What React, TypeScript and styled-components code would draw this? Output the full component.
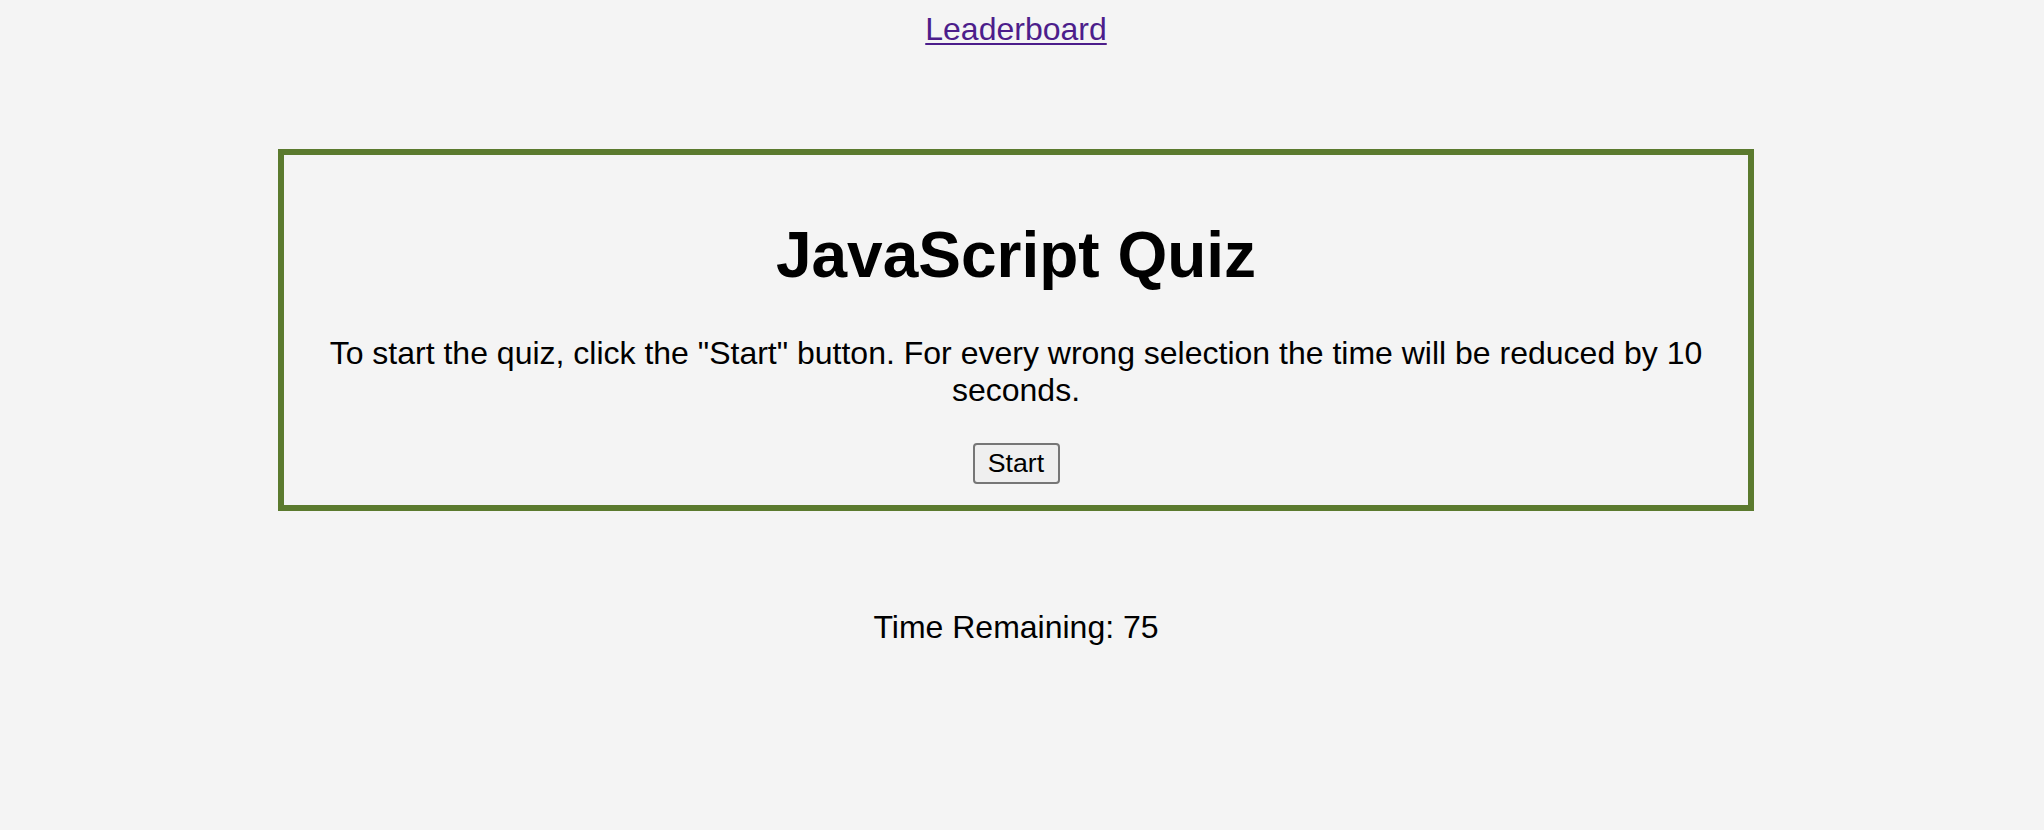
import React from "react";
import styled, { createGlobalStyle } from "styled-components";

const GlobalStyle = createGlobalStyle`
  html, body {
    margin: 0;
    padding: 0;
    background: #f4f4f4;
  }
  body {
    font-family: "Liberation Sans", Arial, sans-serif;
    color: #000;
  }
`;

const Page = styled.div`
  width: 2032px;
  text-align: center;
  font-family: "Liberation Sans", Arial, sans-serif;
`;

const Nav = styled.nav`
  padding-top: 11px;
  font-size: 32px;
  line-height: normal;
`;

const NavLink = styled.a`
  color: #4c1d8b;
  text-decoration: underline;
  text-decoration-thickness: 2px;
  text-underline-offset: 3px;
`;

const QuizCard = styled.section`
  box-sizing: border-box;
  width: 1476px;
  margin: 101px auto 0;
  padding: 20px 20px 21px;
  border: 6px solid #5b7a2e;
`;

const Title = styled.h1`
  margin: 43px 0;
  font-size: 64px;
  font-weight: 700;
  line-height: normal;
`;

const Intro = styled.p`
  margin: 0 0 34px;
  font-size: 32px;
  line-height: normal;
`;

const StartButton = styled.button`
  box-sizing: border-box;
  width: 87px;
  height: 41px;
  padding: 0;
  font-family: "Liberation Sans", Arial, sans-serif;
  font-size: 26.67px;
  line-height: 1;
  color: #000;
  background: #efefef;
  border: 2px solid #767676;
  border-radius: 4px;
  vertical-align: top;
`;

const Timer = styled.p`
  margin: 98px 0 0;
  font-size: 32px;
  line-height: normal;
`;

export default function App() {
  return (
    <>
      <GlobalStyle />
      <Page>
        <Nav>
          <NavLink href="#leaderboard">Leaderboard</NavLink>
        </Nav>
        <QuizCard>
          <Title>JavaScript Quiz</Title>
          <Intro>
            To start the quiz, click the "Start" button. For every wrong selection the time will be reduced by 10 seconds.
          </Intro>
          <StartButton type="button">Start</StartButton>
        </QuizCard>
        <Timer>Time Remaining: 75</Timer>
      </Page>
    </>
  );
}
